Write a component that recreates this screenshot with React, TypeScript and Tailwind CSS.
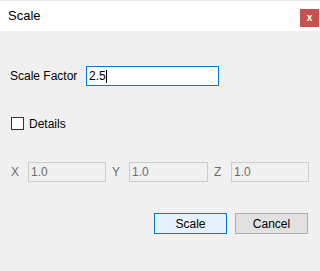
import React from "react";

export default function App() {
  const font = { fontFamily: '"Liberation Sans", Arial, sans-serif' };
  return (
    <div className="w-[320px] h-[271px] bg-[#f0f0f0] flex flex-col text-[12px] text-black overflow-hidden" style={font}>
      <div className="h-[31px] bg-white border-t border-[#e8e8e8] flex items-start justify-between">
        <span className="ml-[8px] mt-[7px] text-[13px] leading-[16px]">Scale</span>
        <div className="mt-[8px] mr-[1px] w-[19px] h-[18px] bg-[#c75050] flex items-center justify-center text-white text-[10px] font-bold leading-none pb-[1px]">x</div>
      </div>
      <div className="flex items-center mt-[35px] h-[20px]">
        <span className="ml-[10px] w-[76px]">Scale Factor</span>
        <div className="w-[133px] h-[20px] border border-[#0078d7] bg-white flex items-center pl-[2px]">
          <span>2.5</span>
          <span className="w-[1px] h-[13px] bg-black"></span>
        </div>
      </div>
      <div className="flex items-center mt-[31px] h-[13px]">
        <div className="ml-[11px] w-[13px] h-[13px] border border-[#333333] bg-white"></div>
        <span className="ml-[5px]">Details</span>
      </div>
      <div className="flex items-center mt-[32px] h-[20px] text-[#6d6d6d]">
        <span className="ml-[11px] w-[17px]">X</span>
        <div className="w-[78px] h-[20px] border border-[#cccccc] bg-[#f0f0f0] flex items-center pl-[2px]">1.0</div>
        <span className="ml-[6px] w-[17px]">Y</span>
        <div className="w-[79px] h-[20px] border border-[#cccccc] bg-[#f0f0f0] flex items-center pl-[2px]">1.0</div>
        <span className="ml-[6px] w-[17px]">Z</span>
        <div className="w-[78px] h-[20px] border border-[#cccccc] bg-[#f0f0f0] flex items-center pl-[2px]">1.0</div>
      </div>
      <div className="flex items-center mt-[31px] h-[21px]">
        <div className="ml-[154px] w-[73px] h-[21px] border border-[#0078d7] bg-[#e5f1fb] flex items-center justify-center">Scale</div>
        <div className="ml-[8px] w-[73px] h-[21px] border border-[#adadad] bg-[#e1e1e1] flex items-center justify-center">Cancel</div>
      </div>
    </div>
  );
}
